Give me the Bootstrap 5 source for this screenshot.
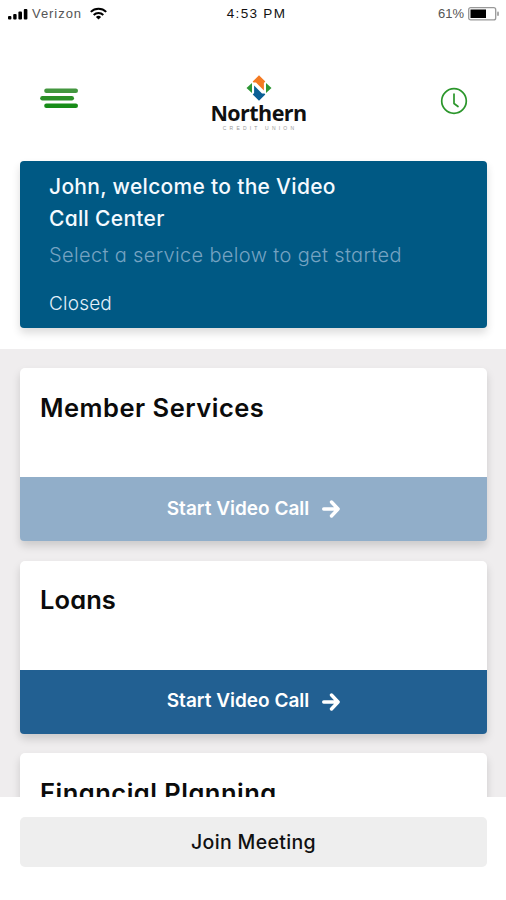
<!DOCTYPE html>
<html lang="en">
<head>
<meta charset="utf-8">
<meta name="viewport" content="width=device-width, initial-scale=1">
<title>Northern Credit Union – Video Call Center</title>
<link href="https://cdn.jsdelivr.net/npm/bootstrap@5.3.0/dist/css/bootstrap.min.css" rel="stylesheet">
<style>
  body { font-family: Inter, "Open Sans", sans-serif; font-feature-settings: "cv11"; color: #0b0b0b; }
  svg { display: block; flex: none; }
  .status-bar { height: 27px; padding: 0 6px 0 8px; font-family: "Liberation Sans", sans-serif; font-size: 13px; line-height: 27px; color: #555; }
  .status-bar > div { flex: 1 1 0; }
  .carrier { letter-spacing: .95px; margin-left: 4px; }
  .clock-time { letter-spacing: 1.3px; padding-left: 5px; font-size: 13.500px; color: #111; }
  .app-header { height: 134px; padding: 0 38px 0 39px; }
  .brand { width: 100px; margin-left: -2px; padding-top: 48px; }
  .brand-name { font-family: "Open Sans", sans-serif; font-weight: 700; font-size: 21.5px; line-height: 23px; letter-spacing: -.55px; color: #101010; }
  .brand-sub { font-family: "Liberation Sans", sans-serif; font-size: 5px; line-height: 6px; margin-top: 1px; padding-left: 3px; letter-spacing: 3.2px; color: #999; }
  .menu-icon { margin-top: 60px; }
  .clock-icon { margin-top: 60px; }
  .hero { height: 167px; margin: 0 19px 21px 20px; padding: 10px 29px 0; background: #005984; border-radius: 4px; box-shadow: 0 5px 9px rgba(0,0,0,.14); color: #f5faff; }
  .hero h1 { font-size: 21px; line-height: 32px; font-weight: 500; letter-spacing: .3px; margin: 0; }
  .hero-hint { font-size: 20px; line-height: 32px; margin-top: 4px; font-weight: 300; letter-spacing: .35px; color: #75a3c2; }
  .hero-state { font-size: 19px; line-height: 28px; margin-top: 19px; font-weight: 300; letter-spacing: .2px; color: #e4f0fa; }
  .services { height: 448px; padding: 19px 19px 0 20px; background: #efedee; gap: 19.5px; }
  .service { height: 173px; border-radius: 5px; box-shadow: 0 5px 9px rgba(0,0,0,.15); }
  .service h2 { font-size: 25.5px; line-height: 40px; font-weight: 600; letter-spacing: .5px; margin: 0; padding: 19.500px 20px 0; flex: 1; }
  .service h2.is-tight { letter-spacing: .1px; }
  .start-call { height: 64px; gap: 13px; border: 0; border-radius: 0 0 4px 4px; background: #226092; color: #fff; font-size: 19px; font-weight: 600; }
  .start-call.is-off { background: #91aec9; }
  .app-footer { height: 103px; padding: 20px 19px 0 20px; }
  .join { height: 50px; padding: 2px 6px 0; border: 0; border-radius: 5px; background: #eee; color: #111; font-size: 19.5px; font-weight: 500; letter-spacing: .35px; }
</style>
</head>
<body class="bg-white overflow-hidden">
<div class="status-bar d-flex">
  <div class="d-flex align-items-center">
    <svg width="20" height="12" viewBox="0 0 20 12" fill="#000"><rect x="0" y="8" width="3.4" height="3.6" rx="1"/><rect x="5.2" y="6" width="3.4" height="5.6" rx="1"/><rect x="10.4" y="3.5" width="3.6" height="8.1" rx="1"/><rect x="15.8" y="1" width="3.6" height="10.6" rx="1"/></svg>
    <span class="carrier">Verizon</span>
    <svg class="ms-2" width="17" height="13" viewBox="0 0 17 13" fill="none" stroke="#000" stroke-width="2"><path d="M.8 4.9a11 11 0 0 1 15.4 0M3.7 8a6.8 6.8 0 0 1 9.6 0"/><path d="M8.5 12.6 5.9 10a3.8 3.8 0 0 1 5.2 0z" fill="#000" stroke="none"/></svg>
  </div>
  <div class="text-center clock-time">4:53 PM</div>
  <div class="d-flex align-items-center justify-content-end">
    <span>61%</span>
    <svg class="ms-1" width="32" height="14" viewBox="0 0 32 14"><rect x=".7" y=".7" width="27" height="12.2" rx="2" fill="#fff" stroke="#999" stroke-width="1.3"/><rect x="2.5" y="2.5" width="15.5" height="8.5" fill="#000"/><rect x="29" y="4.5" width="2" height="4.5" rx="1" fill="#aaa"/></svg>
  </div>
</div>

<header class="app-header d-flex justify-content-between">
  <svg class="menu-icon" width="40" height="22" viewBox="0 0 40 22" stroke-width="4.4" stroke-linecap="round"><path d="M7.4 3.8h29.4" stroke="#43963f"/><path d="M3.4 11.3h29.4" stroke="#2b8f27"/><path d="M7.4 18.7h29.4" stroke="#178c18"/></svg>
  <div class="brand d-flex flex-column align-items-center">
    <svg width="26" height="26" viewBox="0 0 26 26">
      <path d="M13 .3 19.300 6.500 17.900 8V15.500L10 7.500H7.500L6.700 6.500z" fill="#f47a22"/>
      <path d="M13 25.700 6.700 19.500 8.100 18V10.500L16 18.500H18.500L19.300 19.500z" fill="#0b5f95"/>
      <path d="M6 8V18L.5 13zM20 8V18L25.500 13z" fill="#2d9634"/>
    </svg>
    <div class="brand-name">Northern</div>
    <div class="brand-sub text-nowrap">CREDIT UNION</div>
  </div>
  <svg class="clock-icon" width="28" height="28" viewBox="0 0 28 28" fill="none" stroke="#2b962b" stroke-width="1.7" stroke-linecap="round" stroke-linejoin="round"><circle cx="14" cy="14" r="12.3"/><path d="M14 7v9.500L18 19.500"/></svg>
</header>

<section class="hero">
  <h1><span>John, welcome to the Video</span><br><span>Call Center</span></h1>
  <div class="hero-hint text-nowrap"><span>Select a service below to get started</span></div>
  <div class="hero-state">Closed</div>
</section>

<main class="services d-flex flex-column overflow-hidden">
  <article class="service d-flex flex-column flex-shrink-0 bg-white">
    <h2>Member Services</h2>
    <button class="start-call is-off d-flex align-items-center justify-content-center" type="button">Start Video Call
      <svg width="18" height="18" viewBox="0 0 18 18" fill="none" stroke="#fff" stroke-width="3.400" stroke-linecap="round" stroke-linejoin="round"><path d="M1.700 9h14M9.500 2l6.600 7-6.600 7"/></svg></button>
  </article>
  <article class="service d-flex flex-column flex-shrink-0 bg-white">
    <h2 class="is-tight">Loans</h2>
    <button class="start-call d-flex align-items-center justify-content-center" type="button">Start Video Call
      <svg width="18" height="18" viewBox="0 0 18 18" fill="none" stroke="#fff" stroke-width="3.400" stroke-linecap="round" stroke-linejoin="round"><path d="M1.700 9h14M9.500 2l6.600 7-6.600 7"/></svg></button>
  </article>
  <article class="service d-flex flex-column flex-shrink-0 bg-white">
    <h2>Financial Planning</h2>
  </article>
</main>

<footer class="app-footer bg-white">
  <button class="join w-100" type="button">Join Meeting</button>
</footer>
<script src="https://cdn.jsdelivr.net/npm/bootstrap@5.3.0/dist/js/bootstrap.bundle.min.js"></script>
</body>
</html>
